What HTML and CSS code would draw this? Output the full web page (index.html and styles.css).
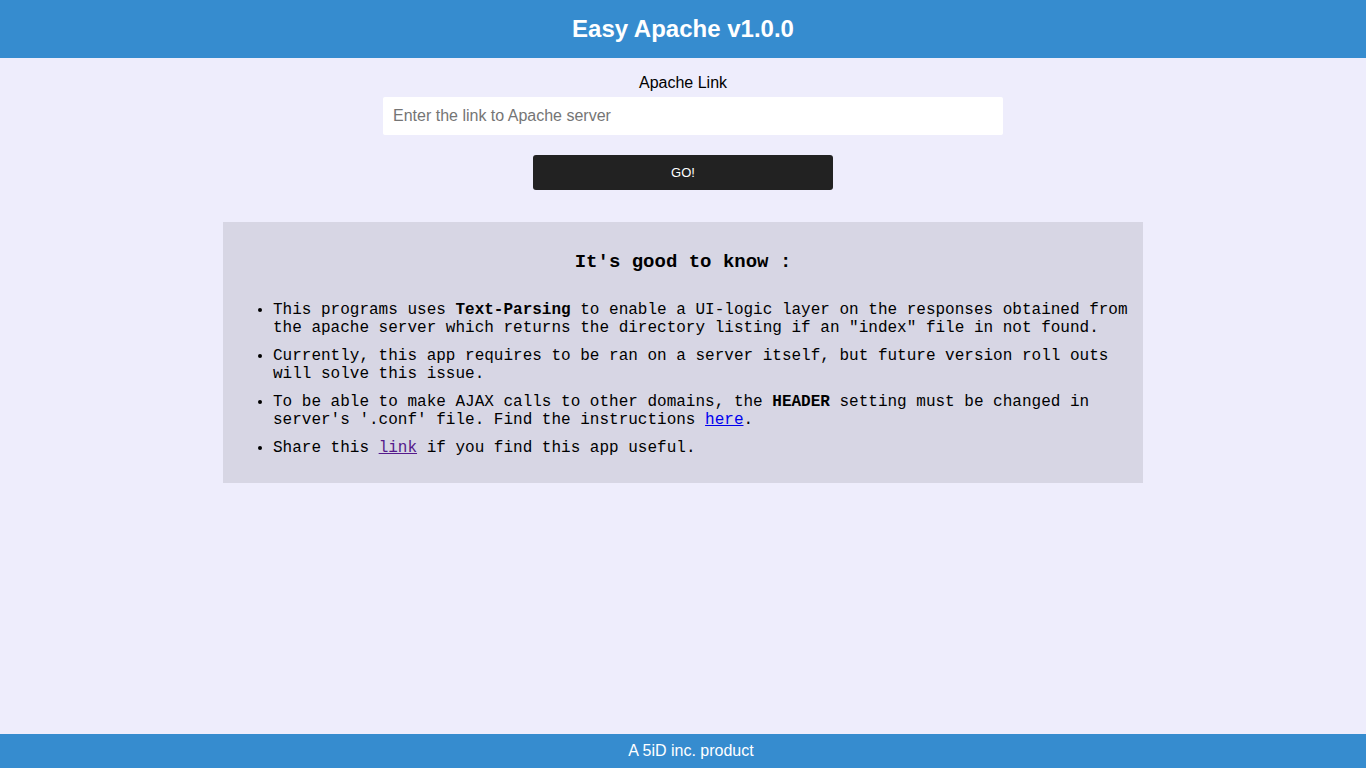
FILE: index.html
```html
<!DOCTYPE html>
<html>
<head>
<meta charset="utf-8">
<title>Easy Apache</title>
<link rel="stylesheet" href="styles.css">
</head>
<body>
<header class="topbar"><h1 class="title">Easy Apache v1.0.0</h1></header>
<main class="main">
  <form class="form">
    <label class="label" for="link">Apache Link</label>
    <input class="input" id="link" type="text" placeholder="Enter the link to Apache server">
    <button class="go" type="button">GO!</button>
  </form>
  <section class="info">
    <h3 class="info-title">It's good to know :</h3>
    <ul class="info-list">
      <li>This programs uses <b>Text-Parsing</b> to enable a UI-logic layer on the responses obtained from the apache server which returns the directory listing if an "index" file in not found.</li>
      <li>Currently, this app requires to be ran on a server itself, but future version roll outs will solve this issue.</li>
      <li>To be able to make AJAX calls to other domains, the <b>HEADER</b> setting must be changed in server's '.conf' file. Find the instructions <a class="lnk" href="#">here</a>.</li>
      <li>Share this <a class="lnk visited" href="#">link</a> if you find this app useful.</li>
    </ul>
  </section>
</main>
<footer class="footer">A 5iD inc. product</footer>
</body>
</html>
```
FILE: styles.css
```css
html, body { margin: 0; padding: 0; }
body {
  background: #eeedfc;
  font-family: "Liberation Sans", Arial, sans-serif;
  color: #000;
  min-height: 768px;
}
.topbar {
  background: #368ccf;
  height: 58px;
  display: flex;
  align-items: center;
  justify-content: center;
}
.title {
  margin: 0;
  color: #fff;
  font-size: 24px;
  font-weight: bold;
}
.main {
  display: flex;
  flex-direction: column;
  align-items: center;
}
.form {
  display: flex;
  flex-direction: column;
  align-items: center;
  padding-top: 16px;
}
.label {
  font-size: 16px;
  line-height: 18px;
  height: 18px;
  margin-bottom: 5px;
}
.input {
  width: 620px;
  height: 38px;
  box-sizing: border-box;
  margin-left: 20px;
  border: none;
  border-radius: 2px;
  background: #fff;
  padding: 0 10px;
  font-family: "Liberation Sans", Arial, sans-serif;
  font-size: 16px;
  outline: none;
}
.input::placeholder { color: #757575; }
.go {
  margin-top: 20px;
  width: 300px;
  height: 35px;
  border: none;
  border-radius: 3px;
  background: #222;
  color: #fff;
  font-family: "Liberation Sans", Arial, sans-serif;
  font-size: 13px;
}
.info {
  margin-top: 32px;
  width: 920px;
  box-sizing: border-box;
  background: #d7d6e4;
  padding: 16px 10px 16px 10px;
  font-family: "Liberation Mono", "Courier New", monospace;
  font-size: 16px;
}
.info-title {
  text-align: center;
  font-size: 19px;
  font-weight: bold;
  margin: 13px 0 28px;
  line-height: 22px;
}
.info-list {
  margin: 0;
  padding-left: 40px;
  line-height: 18px;
}
.info-list li { margin-bottom: 10px; }
.lnk { color: #0000ee; }
.lnk.visited { color: #551a8b; }
.footer {
  position: fixed;
  left: 0;
  right: 0;
  bottom: 0;
  height: 34px;
  padding-left: 16px;
  background: #368ccf;
  color: #fff;
  font-family: "Liberation Sans", Arial, sans-serif;
  font-size: 16px;
  display: flex;
  align-items: center;
  justify-content: center;
}
```
